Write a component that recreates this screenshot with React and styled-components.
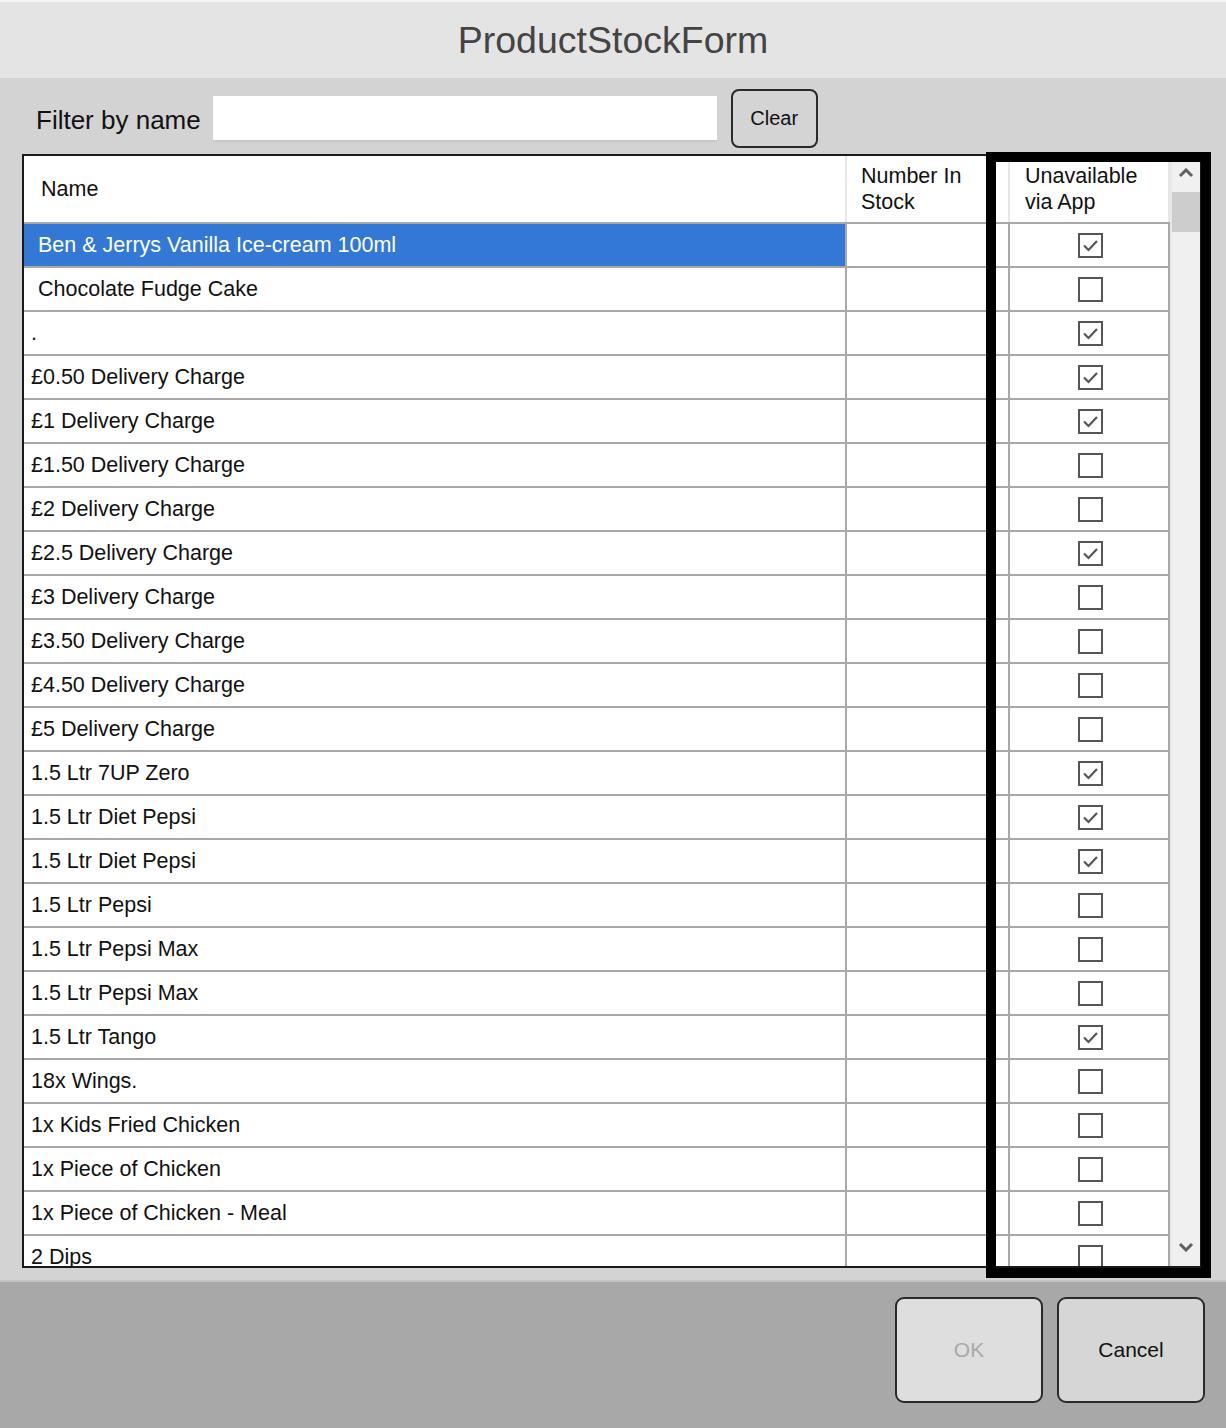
import React from "react";
import styled, { createGlobalStyle } from "styled-components";

const Global = createGlobalStyle`
  html, body { margin: 0; padding: 0; }
  body { width: 1226px; height: 1428px; overflow: hidden; font-family: "Liberation Sans", Arial, sans-serif; }
  * { box-sizing: border-box; }
`;

const Window = styled.div`
  width: 1226px;
  height: 1428px;
  display: flex;
  flex-direction: column;
`;

const TitleBar = styled.div`
  height: 78px;
  background: #e4e4e4;
  border-top: 2px solid #f4f4f4;
  display: flex;
  align-items: center;
  justify-content: center;
`;

const Title = styled.h1`
  margin: 0;
  font-weight: normal;
  font-size: 37.5px;
  color: #444;
`;

const Body = styled.div`
  position: relative;
  height: 1202px;
  background: #d3d3d3;
  padding: 0 24px 12px 22px;
  display: flex;
  flex-direction: column;
`;

const FilterRow = styled.div`
  height: 76px;
  display: flex;
  align-items: center;
`;

const FilterLabel = styled.label`
  margin-left: 14px;
  font-size: 26px;
  color: #111;
  padding-top: 8px;
`;

const FilterInput = styled.input`
  margin-left: 12px;
  margin-top: 6px;
  width: 504px;
  height: 46px;
  border: none;
  border-bottom: 2px solid #c8c8c8;
  background: #fff;
  outline: none;
`;

const ClearButton = styled.button`
  margin-left: 14px;
  margin-top: 4px;
  width: 87px;
  height: 59px;
  border: 2px solid #2a2a2a;
  border-radius: 8px;
  background: #d4d4d4;
  font-family: "Liberation Sans", Arial, sans-serif;
  font-size: 20px;
  color: #111;
  padding: 0;
`;

const Grid = styled.div`
  flex: 1;
  border: 2px solid #1a1a1a;
  background: #fff;
  display: flex;
  overflow: hidden;
`;

const Table = styled.div`
  flex: 1;
  display: flex;
  flex-direction: column;
  overflow: hidden;
`;

const Row = styled.div`
  display: grid;
  grid-template-columns: 823px 163px 160px;
  height: ${(p) => (p.$header ? "68px" : "44px")};
  flex-shrink: 0;
  border-bottom: 2px solid #a8a8a8;
`;

const Cell = styled.div`
  display: flex;
  align-items: center;
  justify-content: ${(p) => (p.$center ? "center" : "flex-start")};
  padding-left: ${(p) => p.$pad || 0}px;
  border-right: 2px solid ${(p) => (p.$header ? "#e6e6e6" : "#a8a8a8")};
  background: ${(p) => (p.$selected ? "#3478d6" : "#fff")};
  color: ${(p) => (p.$selected ? "#fff" : "#111")};
  font-size: 21.5px;
  line-height: 26px;
  white-space: nowrap;
  overflow: hidden;
`;

const HeaderText = styled.span`
  font-size: 21.5px;
  line-height: 26px;
  color: #111;
`;

const Box = styled.div`
  width: 25px;
  height: 25px;
  margin-left: 2px;
  border: 2px solid #555;
  background: #fff;
  display: flex;
  align-items: center;
  justify-content: center;
`;

const Scrollbar = styled.div`
  width: 30px;
  background: #f0f0f0;
  display: flex;
  flex-direction: column;
  border-left: 2px solid #e8e8e8;
`;

const ArrowButton = styled.div`
  height: ${(p) => p.$h}px;
  display: flex;
  align-items: ${(p) => p.$align};
  justify-content: center;
  padding: ${(p) => p.$pad};
`;

const Thumb = styled.div`
  height: 40px;
  background: #cdcdcd;
`;

const Track = styled.div`
  flex: 1;
`;

const Highlight = styled.div`
  position: absolute;
  left: 986px;
  top: 74px;
  width: 225px;
  height: 1126px;
  border: 10px solid #000;
  pointer-events: none;
`;

const Footer = styled.div`
  height: 148px;
  background: #a8a8a8;
  border-top: 2px solid #c4c4c4;
  display: flex;
  justify-content: flex-end;
  align-items: flex-start;
  gap: 14px;
  padding: 15px 21px 0 0;
`;

const FooterButton = styled.button`
  width: 148px;
  height: 106px;
  border: 2px solid #2a2a2a;
  border-radius: 9px;
  background: ${(p) => (p.disabled ? "#dedede" : "#d6d6d6")};
  color: ${(p) => (p.disabled ? "#a9a9a9" : "#111")};
  font-family: "Liberation Sans", Arial, sans-serif;
  font-size: 21px;
  padding: 0;
`;

const Check = () => (
  <svg width="19" height="19" viewBox="0 0 19 19">
    <path d="M3 9.5 L7.5 14 L16 5" fill="none" stroke="#555" strokeWidth="2.2" />
  </svg>
);

const Chevron = ({ down }) => (
  <svg width="16" height="10" viewBox="0 0 16 10">
    <path
      d={down ? "M2 2 L8 8 L14 2" : "M2 8 L8 2 L14 8"}
      fill="none"
      stroke="#606060"
      strokeWidth="3"
    />
  </svg>
);

const items = [
  ["Ben & Jerrys Vanilla Ice-cream 100ml", true, true],
  ["Chocolate Fudge Cake", false, true],
  [".", true],
  ["£0.50 Delivery Charge", true],
  ["£1 Delivery Charge", true],
  ["£1.50 Delivery Charge", false],
  ["£2 Delivery Charge", false],
  ["£2.5 Delivery Charge", true],
  ["£3 Delivery Charge", false],
  ["£3.50 Delivery Charge", false],
  ["£4.50 Delivery Charge", false],
  ["£5 Delivery Charge", false],
  ["1.5 Ltr 7UP Zero", true],
  ["1.5 Ltr Diet Pepsi", true],
  ["1.5 Ltr Diet Pepsi", true],
  ["1.5 Ltr Pepsi", false],
  ["1.5 Ltr Pepsi Max", false],
  ["1.5 Ltr Pepsi Max", false],
  ["1.5 Ltr Tango", true],
  ["18x Wings.", false],
  ["1x Kids Fried Chicken", false],
  ["1x Piece of Chicken", false],
  ["1x Piece of Chicken - Meal", false],
  ["2 Dips", false],
];

export default function App() {
  return (
    <Window>
      <Global />
      <TitleBar>
        <Title>ProductStockForm</Title>
      </TitleBar>
      <Body>
        <FilterRow>
          <FilterLabel>Filter by name</FilterLabel>
          <FilterInput type="text" />
          <ClearButton>Clear</ClearButton>
        </FilterRow>
        <Grid>
          <Table>
            <Row $header>
              <Cell $header $pad={17}>
                <HeaderText>Name</HeaderText>
              </Cell>
              <Cell $header $pad={14}>
                <HeaderText>
                  Number In
                  <br />
                  Stock
                </HeaderText>
              </Cell>
              <Cell $header $pad={15}>
                <HeaderText>
                  Unavailable
                  <br />
                  via App
                </HeaderText>
              </Cell>
            </Row>
            {items.map(([name, checked, indent], i) => (
              <Row key={i}>
                <Cell $pad={indent ? 14 : 7} $selected={i === 0}>
                  {name}
                </Cell>
                <Cell />
                <Cell $center>
                  <Box>{checked && <Check />}</Box>
                </Cell>
              </Row>
            ))}
          </Table>
          <Scrollbar>
            <ArrowButton $h={36} $align="flex-start" $pad="12px 0 0">
              <Chevron />
            </ArrowButton>
            <Thumb />
            <Track />
            <ArrowButton $h={30} $align="flex-start" $pad="6px 0 0">
              <Chevron down />
            </ArrowButton>
          </Scrollbar>
        </Grid>
        <Highlight />
      </Body>
      <Footer>
        <FooterButton disabled>OK</FooterButton>
        <FooterButton>Cancel</FooterButton>
      </Footer>
    </Window>
  );
}
